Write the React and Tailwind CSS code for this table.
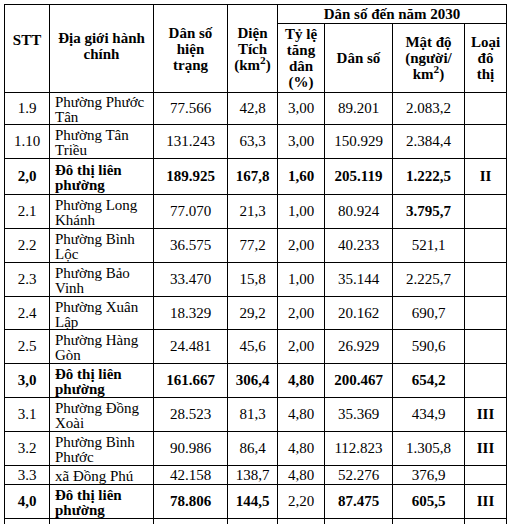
const rows = [
  { stt: '1.9', name: 'Phường Phước Tân', ds: '77.566', dt: '42,8', tl: '3,00', ds30: '89.201', md: '2.083,2', loai: '', h: 'h-[32px]' },
  { stt: '1.10', name: 'Phường Tân Triều', ds: '131.243', dt: '63,3', tl: '3,00', ds30: '150.929', md: '2.384,4', loai: '', h: 'h-[34px]' },
  { stt: '2,0', name: 'Đô thị liên phường', ds: '189.925', dt: '167,8', tl: '1,60', ds30: '205.119', md: '1.222,5', loai: 'II', h: 'h-[36px]', bold: true },
  { stt: '2.1', name: 'Phường Long Khánh', ds: '77.070', dt: '21,3', tl: '1,00', ds30: '80.924', md: '3.795,7', loai: '', h: 'h-[34px]', boldMd: true },
  { stt: '2.2', name: 'Phường Bình Lộc', ds: '36.575', dt: '77,2', tl: '2,00', ds30: '40.233', md: '521,1', loai: '', h: 'h-[34px]' },
  { stt: '2.3', name: 'Phường Bảo Vinh', ds: '33.470', dt: '15,8', tl: '1,00', ds30: '35.144', md: '2.225,7', loai: '', h: 'h-[34px]' },
  { stt: '2.4', name: 'Phường Xuân Lập', ds: '18.329', dt: '29,2', tl: '2,00', ds30: '20.162', md: '690,7', loai: '', h: 'h-[33px]' },
  { stt: '2.5', name: 'Phường Hàng Gòn', ds: '24.481', dt: '45,6', tl: '2,00', ds30: '26.929', md: '590,6', loai: '', h: 'h-[34px]' },
  { stt: '3,0', name: 'Đô thị liên phường', ds: '161.667', dt: '306,4', tl: '4,80', ds30: '200.467', md: '654,2', loai: '', h: 'h-[34px]', bold: true },
  { stt: '3.1', name: 'Phường Đồng Xoài', ds: '28.523', dt: '81,3', tl: '4,80', ds30: '35.369', md: '434,9', loai: 'III', h: 'h-[34px]' },
  { stt: '3.2', name: 'Phường Bình Phước', ds: '90.986', dt: '86,4', tl: '4,80', ds30: '112.823', md: '1.305,8', loai: 'III', h: 'h-[34px]' },
  { stt: '3.3', name: 'xã Đồng Phú', ds: '42.158', dt: '138,7', tl: '4,80', ds30: '52.276', md: '376,9', loai: '', h: 'h-[19px]' },
  { stt: '4,0', name: 'Đô thị liên phường', ds: '78.806', dt: '144,5', tl: '2,20', ds30: '87.475', md: '605,5', loai: 'III', h: 'h-[34px]', bold: true, plainTl: true },
  { stt: '', name: '', ds: '', dt: '', tl: '', ds30: '', md: '', loai: '', h: 'h-[34px]' },
];

const cell = 'border-r border-b border-black flex items-center overflow-hidden';

function Row({ r }) {
  const b = r.bold ? 'font-bold' : '';
  return (
    <>
      <div className={`${cell} ${r.h} ${b} justify-center`}>{r.stt}</div>
      <div className={`${cell} ${r.h} ${b} pl-[5px] pr-[4px] pt-[3px]`}>{r.name}</div>
      <div className={`${cell} ${r.h} ${b} justify-center`}>{r.ds}</div>
      <div className={`${cell} ${r.h} ${b} justify-center`}>{r.dt}</div>
      <div className={`${cell} ${r.h} ${r.bold && !r.plainTl ? 'font-bold' : ''} justify-center`}>{r.tl}</div>
      <div className={`${cell} ${r.h} ${b} justify-center`}>{r.ds30}</div>
      <div className={`${cell} ${r.h} ${r.bold || r.boldMd ? 'font-bold' : ''} justify-center`}>{r.md}</div>
      <div className={`${cell} ${r.h} font-bold justify-center`}>{r.loai}</div>
    </>
  );
}

export default function App() {
  return (
    <div className="min-h-screen bg-white pl-[4px] pt-[4px] font-['Liberation_Serif',serif] text-[15px] leading-[15px] text-black">
      <div className="grid w-fit grid-cols-[45px_104px_74px_50px_47px_68px_72px_42px] border-l border-t border-black">
        {/* header */}
        <div className="row-span-2 h-[88px] border-r border-b border-black pt-[27px] text-center font-bold leading-[16px]">STT</div>
        <div className="row-span-2 h-[88px] border-r border-b border-black pt-[25px] text-center font-bold leading-[16px]">
          Địa giới hành chính
        </div>
        <div className="row-span-2 h-[88px] border-r border-b border-black px-[8px] pt-[20px] text-center font-bold leading-[16px]">
          Dân số hiện trạng
        </div>
        <div className="row-span-2 h-[88px] border-r border-b border-black px-[4px] pt-[20px] text-center font-bold leading-[16px]">
          Diện Tích (km<sup>2</sup>)
        </div>
        <div className="col-span-4 flex h-[19px] items-center justify-center border-r border-b border-black font-bold">
          Dân số đến năm 2030
        </div>
        <div className="flex h-[69px] items-center justify-center border-r border-b border-black px-[6px] text-center font-bold leading-[16px]">
          Tỷ lệ tăng dân (%)
        </div>
        <div className="flex h-[69px] items-center justify-center border-r border-b border-black text-center font-bold leading-[16px]">
          Dân số
        </div>
        <div className="flex h-[69px] items-center justify-center border-r border-b border-black px-[8px] text-center font-bold leading-[16px]">
          <span>
            Mật độ (người/ km<sup>2</sup>)
          </span>
        </div>
        <div className="flex h-[69px] items-center justify-center border-r border-b border-black px-[6px] text-center font-bold leading-[16px]">
          Loại đô thị
        </div>
        {rows.map((r, i) => (
          <Row key={i} r={r} />
        ))}
      </div>
    </div>
  );
}
